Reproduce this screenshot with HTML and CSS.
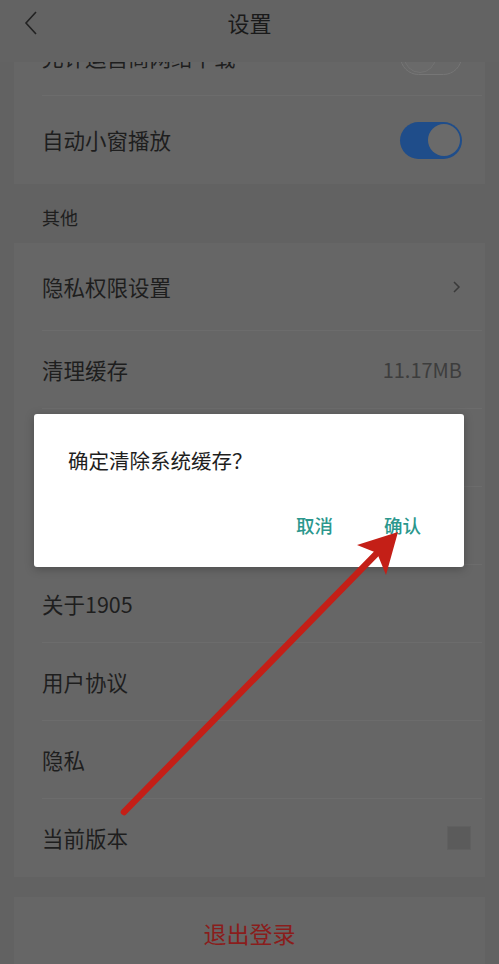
FILE: index.html
```html
<!DOCTYPE html>
<html lang="zh-CN">
<head>
<meta charset="utf-8">
<title>设置</title>
<link rel="stylesheet" href="styles.css">
</head>
<body>
<div class="screen">
  <header class="topbar">
    <svg class="back" width="16" height="26" viewBox="0 0 16 26"><polyline points="13,2 3,13 13,24" fill="none" stroke="#222" stroke-width="1.6" stroke-linejoin="miter"/></svg>
    <h1 class="title">设置</h1>
  </header>
  <main class="scroll">
    <div class="content">
      <section class="card">
        <div class="row"><span class="label">允许运营商网络下载</span><span class="toggle toggle--off"><span class="knob"></span></span></div>
        <div class="row row--tall row--last"><span class="label">自动小窗播放</span><span class="toggle toggle--on"><span class="knob"></span></span></div>
      </section>
      <div class="section-title">其他</div>
      <section class="card">
        <div class="row row--tall"><span class="label">隐私权限设置</span>
          <svg class="chev" width="9" height="14" viewBox="0 0 9 14"><polyline points="2,2 7,7 2,12" fill="none" stroke="#3a3a3a" stroke-width="1.5"/></svg>
        </div>
        <div class="row"><span class="label">清理缓存</span><span class="value">11.17MB</span></div>
        <div class="row"><span class="label">消息推送</span></div>
        <div class="row"><span class="label">意见反馈</span></div>
        <div class="row"><span class="label">关于1905</span></div>
        <div class="row"><span class="label">用户协议</span></div>
        <div class="row"><span class="label">隐私</span></div>
        <div class="row row--last"><span class="label">当前版本</span><span class="version-badge"></span></div>
      </section>
      <section class="card card--logout">
        <div class="logout">退出登录</div>
      </section>
    </div>
  </main>

  <div class="dialog">
    <p class="dialog-title">确定清除系统缓存？</p>
    <div class="dialog-actions">
      <span class="dialog-btn">取消</span>
      <span class="dialog-btn">确认</span>
    </div>
  </div>

  <svg class="annotation" width="499" height="964" viewBox="0 0 499 964">
    <line x1="124" y1="812" x2="382" y2="548" stroke="#c41f17" stroke-width="6.5" stroke-linecap="round"/>
    <polygon points="398,532 357,545 377,553 386,575" fill="#c41f17"/>
  </svg>
</div>
</body>
</html>
```
FILE: styles.css
```css
html, body {
  margin: 0;
  padding: 0;
}
body {
  background: #626262;
  font-family: "Noto Sans CJK SC", "Noto Sans", sans-serif;
  color: #202020;
}
.screen {
  position: relative;
  width: 499px;
  height: 964px;
  overflow: hidden;
  background: #626262;
}
.topbar {
  position: relative;
  z-index: 1;
  height: 62px;
  background: #636363;
  display: flex;
  justify-content: center;
  align-items: flex-start;
}
.back {
  position: absolute;
  left: 23px;
  top: 10px;
}
.title {
  margin: 7px 0 0;
  font-size: 22px;
  line-height: 30px;
  font-weight: 400;
  color: #1a1a1a;
}
.scroll {
  height: 902px;
  overflow: hidden;
}
.content {
  margin-top: -44px;
  display: flex;
  flex-direction: column;
}
.card {
  margin: 0 14px;
  background: #666666;
  display: flex;
  flex-direction: column;
}
.row {
  box-sizing: border-box;
  height: 78px;
  margin: 0 3px 0 28px;
  padding-right: 20px;
  border-bottom: 1px solid #6c6c6c;
  display: flex;
  align-items: center;
  justify-content: space-between;
}
.row--tall {
  height: 88px;
}
.row--last {
  border-bottom: none;
}
.label {
  font-size: 21.5px;
  line-height: 30px;
  color: #1e1e1e;
}
.value {
  font-size: 20px;
  color: #3d3d3d;
}
.chev {
  margin-right: 1px;
}
.toggle {
  box-sizing: border-box;
  width: 62px;
  height: 37px;
  border-radius: 19px;
  padding: 2.5px;
  display: flex;
  align-items: center;
}
.toggle--on {
  background: #1f4d8a;
  justify-content: flex-end;
}
.toggle--off {
  background: #686868;
  border: 1.5px solid #767676;
  justify-content: flex-start;
}
.knob {
  width: 32px;
  height: 32px;
  border-radius: 50%;
  background: #6a6a6a;
}
.toggle--off .knob {
  border: 1px solid #737373;
  box-sizing: border-box;
}
.section-title {
  box-sizing: border-box;
  height: 59px;
  padding: 6px 0 0 42px;
  display: flex;
  align-items: center;
  font-size: 18px;
  color: #1e1e1e;
}
.version-badge {
  width: 24px;
  height: 24px;
  background: #5b5b5b;
  border: 1px solid #606060;
  box-sizing: border-box;
  margin-right: -9px;
}
.card--logout {
  margin-top: 20px;
  height: 80px;
  align-items: center;
  justify-content: flex-start;
}
.logout {
  margin-top: 21px;
  font-size: 23px;
  line-height: 30px;
  color: #8a1d1c;
}
.dialog {
  position: absolute;
  left: 34px;
  top: 414px;
  width: 430px;
  height: 153px;
  box-sizing: border-box;
  background: #ffffff;
  border-radius: 3px;
  box-shadow: 0 2px 10px rgba(0, 0, 0, 0.25);
  padding: 32px 43px 0 34px;
  z-index: 2;
}
.dialog-title {
  margin: 0;
  font-size: 20.5px;
  line-height: 28px;
  color: #1e1e1e;
}
.dialog-actions {
  margin-top: 38px;
  display: flex;
  justify-content: flex-end;
  gap: 51px;
}
.dialog-btn {
  font-size: 18.5px;
  line-height: 26px;
  font-weight: 500;
  color: #2b978d;
}
.annotation {
  position: absolute;
  left: 0;
  top: 0;
  z-index: 3;
  pointer-events: none;
}
```
